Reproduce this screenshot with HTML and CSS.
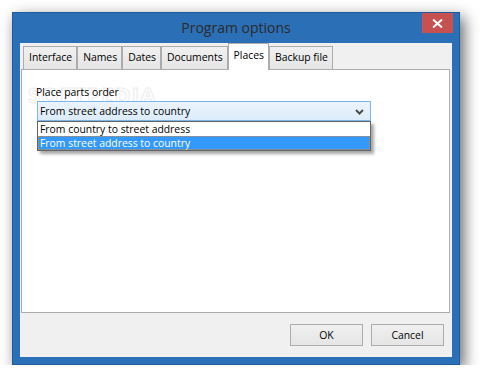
FILE: index.html
```html
<!DOCTYPE html>
<html lang="en">
<head>
  <meta charset="UTF-8" />
  <title>Program options</title>
  <link rel="stylesheet" href="styles.css">
</head>
<body>
  <div class="window">
    <div class="titlebar">
      <span></span>
      <div class="title">Program options</div>
      <div class="close">
        <svg width="11" height="9" viewBox="0 0 11 9">
          <path d="M1 0.5 L10 8.5 M10 0.5 L1 8.5" stroke="#fff" stroke-width="2"/>
        </svg>
      </div>
    </div>

    <div class="client">
      <div class="tabs">
        <div class="tab">Interface</div>
        <div class="tab">Names</div>
        <div class="tab">Dates</div>
        <div class="tab">Documents</div>
        <div class="tab active">Places</div>
        <div class="tab">Backup file</div>
      </div>

      <div class="panel">
        <div class="watermark">SOFTPEDIA</div>
        <div class="field-label">Place parts order</div>
        <div class="combo">
          <div class="combo-box">
            <span>From street address to country</span>
            <svg class="chevron" width="9" height="6" viewBox="0 0 9 6">
              <path d="M1 1 L4.5 4.5 L8 1" fill="none" stroke="#4d4d4d" stroke-width="2"/>
            </svg>
          </div>
          <ul class="combo-list">
            <li>From country to street address</li>
            <li class="selected">From street address to country</li>
          </ul>
        </div>
      </div>

      <div class="footer">
        <button class="btn">OK</button>
        <button class="btn">Cancel</button>
      </div>
    </div>
  </div>
</body>
</html>
```

FILE: styles.css
```css
* {
  box-sizing: border-box;
}

body {
  margin: 0;
  background: #fff;
  font-family: "Open Sans", "Noto Sans", sans-serif;
  font-size: 10.4px;
  color: #000;
}

.window {
  margin: 12px 0 0 12px;
  width: 448px;
  height: 353px;
  background: #2b6fb6;
  border: 1px solid #1f5c9e;
  padding: 0 7px 7px;
  display: flex;
  flex-direction: column;
  box-shadow: 4px 5px 14px rgba(0, 0, 0, 0.6);
}

.titlebar {
  height: 30px;
  display: grid;
  grid-template-columns: 1fr auto 1fr;
  align-items: start;
}

.title {
  font-size: 14px;
  color: #2b2b2b;
  line-height: 18px;
  padding-top: 6px;
}

.close {
  justify-self: end;
  margin-right: -1px;
  width: 31px;
  height: 20px;
  background: #c75050;
  display: flex;
  align-items: center;
  justify-content: center;
}

.client {
  flex: 1;
  background: #f0f0f0;
  display: flex;
  flex-direction: column;
  padding: 0 2px 0 1px;
}

.tabs {
  height: 26px;
  display: flex;
  align-items: flex-end;
  padding-left: 2px;
}

.tab {
  height: 23px;
  padding: 0 4px 0 5px;
  border: 1px solid #acacac;
  border-bottom: none;
  background: linear-gradient(#f0f0f0, #e5e5e5);
  line-height: 21px;
  white-space: nowrap;
}

.tab.active {
  height: 27px;
  margin-bottom: -1px;
  background: #fff;
  line-height: 22px;
  position: relative;
  z-index: 1;
}

.panel {
  flex: 1;
  background: #fff;
  border: 1px solid #adadad;
  padding: 14px 0 0 14px;
  position: relative;
}

.watermark {
  position: absolute;
  left: 6px;
  top: 9px;
  font-size: 22px;
  font-weight: bold;
  letter-spacing: 1px;
  color: transparent;
  -webkit-text-stroke: 1px #ededed;
}

.field-label {
  position: relative;
  line-height: 16px;
  margin-bottom: 1px;
}

.combo {
  position: relative;
  width: 334px;
  margin-left: 1px;
}

.combo-box {
  height: 20px;
  border: 1px solid #7eb4ea;
  background: linear-gradient(#ecf4fc, #dcecfc);
  display: flex;
  align-items: center;
  justify-content: space-between;
  padding: 0 6px 0 2px;
}

.chevron {
  margin-top: 1px;
}

.combo-list {
  position: absolute;
  top: 100%;
  left: 0;
  width: 100%;
  margin: 0;
  padding: 0;
  list-style: none;
  background: #fff;
  border: 1px solid #646464;
  box-shadow: 3px 3px 3px rgba(0, 0, 0, 0.35);
}

.combo-list li {
  height: 14px;
  line-height: 14px;
  padding-left: 2px;
}

.combo-list li.selected {
  background: #3399ff;
  color: #fff;
  outline: 1px dotted #d08a3c;
  outline-offset: -1px;
}

.footer {
  height: 44px;
  display: flex;
  justify-content: flex-end;
  align-items: flex-start;
  gap: 8px;
  padding: 11px 6px 0 0;
}

.btn {
  width: 73px;
  height: 22px;
  border: 1px solid #acacac;
  background: linear-gradient(#f0f0f0, #e5e5e5);
  font-family: inherit;
  font-size: 10.4px;
  color: #000;
  padding: 0;
}
```
